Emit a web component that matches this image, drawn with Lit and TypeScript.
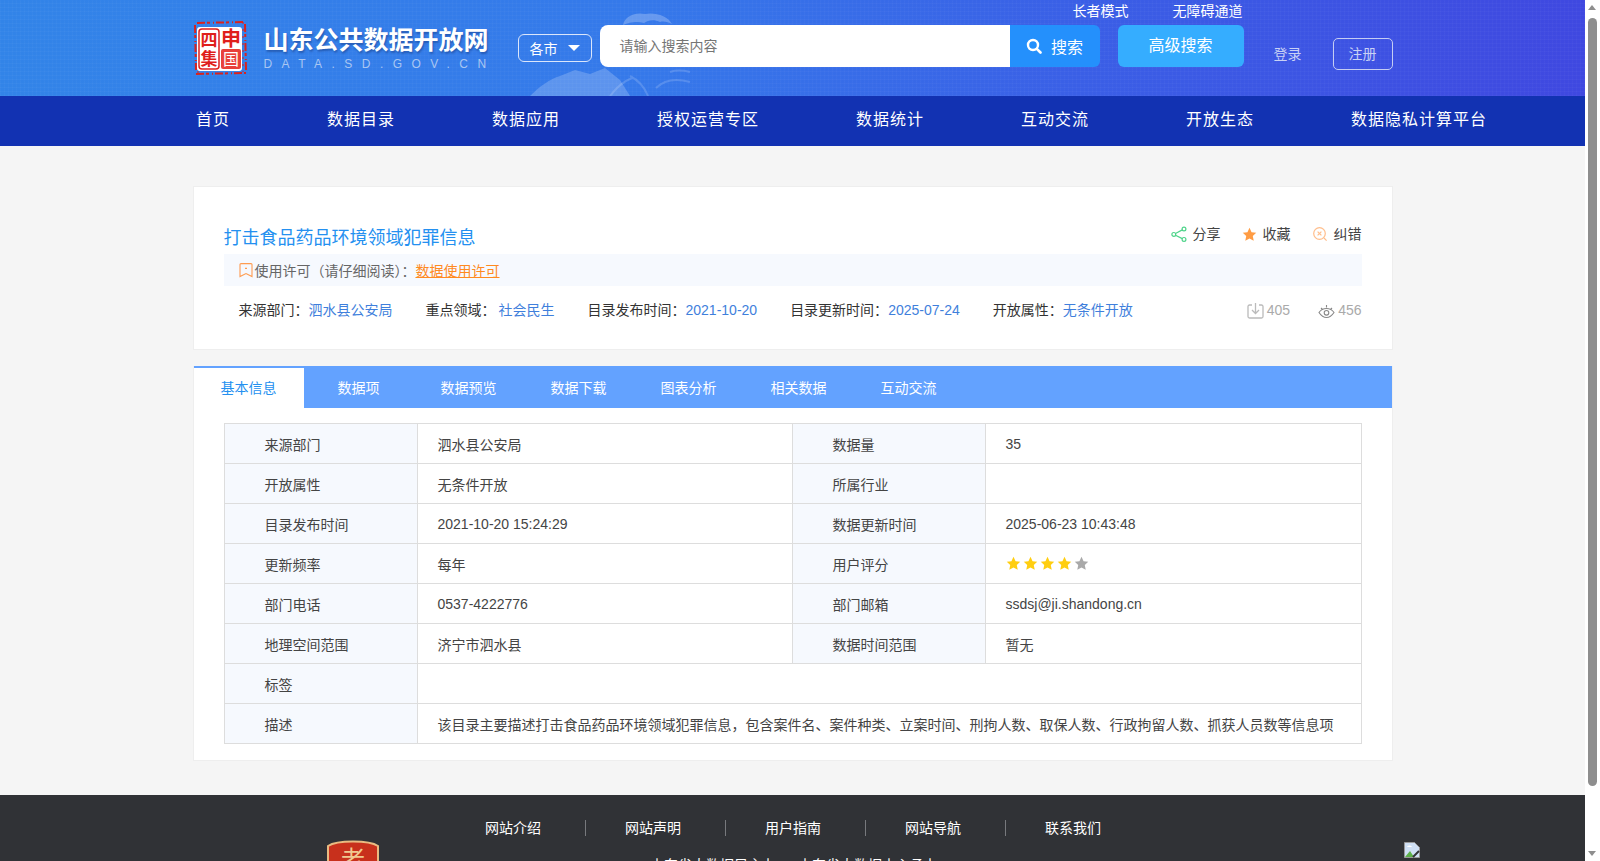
import { LitElement, html, css, svg } from 'lit';
import { customElement } from 'lit/decorators.js';

const NAV = ['首页', '数据目录', '数据应用', '授权运营专区', '数据统计', '互动交流', '开放生态', '数据隐私计算平台'];
const TABS = ['基本信息', '数据项', '数据预览', '数据下载', '图表分析', '相关数据', '互动交流'];
const FOOT = ['网站介绍', '网站声明', '用户指南', '网站导航', '联系我们'];

const STAR = 'M8 .8l2.2 4.7 5 .6-3.7 3.5 1 5.1L8 12.2l-4.500 2.500 1-5.100L.8 6.100l5-.6z';

const star = (fill: string, size = 15) => html`
  <svg width=${size} height=${size} viewBox="0 0 16 16"><path d=${STAR} fill=${fill}></path></svg>
`;

// faint mountain and pine picture behind the search box
const mountain = svg`
  <svg class="mountain" width="180" height="96" viewBox="0 0 180 96">
    <path d="M0 96C10 86 20 79 30 76l15-6 15 4 15-6 15 12 10 16z" fill="#fff" opacity=".2"></path>
    <path d="M93 25c2-9 12-13 22-11 10-2 23 2 27 10-4-2-8-3-12-2-6-3-12-2-16 1-7-2-14-1-21 2z" fill="#fff" opacity=".24"></path>
    <path d="M80 96c6-8 12-14 22-18M100 76c8 4 14 10 18 20M126 88c8-8 20-10 34-6M140 72c6-2 12-2 20 0" fill="none" stroke="#fff" stroke-width="2" opacity=".16"></path>
  </svg>
`;

@customElement('app-root')
export class AppRoot extends LitElement {
  static styles = css`
    :host {
      display: block;
      position: relative;
      height: 861px;
      overflow: hidden;
      background: #fff;
      font-family: "Liberation Sans", "Noto Sans CJK SC", sans-serif;
      font-size: 14px;
      color: #333;
    }
    .page {
      width: 1585px;
      height: 861px;
      overflow: hidden;
      background: #f5f5f5;
    }
    .wrap {
      width: 1200px;
      margin: 0 auto;
      position: relative;
    }

    /* header */
    .top {
      height: 96px;
      position: relative;
      overflow: hidden;
      background:
        repeating-linear-gradient(0deg, rgba(255,255,255,.025) 0 1px, transparent 1px 4px),
        repeating-linear-gradient(90deg, rgba(255,255,255,.025) 0 1px, transparent 1px 4px),
        linear-gradient(90deg, #3284e8 0%, #3579ea 40%, #3a5fe6 68%, #3f48e0 100%);
    }
    .mountain { position: absolute; left: 530px; top: 0; }
    .top .wrap { display: flex; height: 96px; }
    .logo { width: 60px; height: 60px; margin: 17px 0 0 -3px; flex: none; }
    .brand { width: 227px; margin: 25px 0 0 14px; flex: none; color: #fff; }
    .brand b {
      display: block;
      font-size: 25px;
      line-height: 30px;
      font-weight: 700;
      white-space: nowrap;
      text-shadow: 1px 2px 2px rgba(20,50,120,.45);
    }
    .brand span {
      display: block;
      margin-top: 2px;
      font-size: 12px;
      line-height: 14px;
      letter-spacing: 9.45px;
      color: #a9c6f2;
      white-space: nowrap;
    }
    .city {
      box-sizing: border-box;
      width: 74px;
      height: 28px;
      margin: 34px 0 0 27px;
      flex: none;
      border: 1px solid #dbe6fb;
      border-radius: 6px;
      color: #fff;
      display: flex;
      align-items: center;
      padding-left: 11px;
      gap: 10px;
      font-size: 14px;
    }
    .city i {
      border: 6px solid transparent;
      border-top: 6px solid #fff;
      border-bottom: 0;
      width: 0;
      height: 0;
    }
    .search { display: flex; height: 42px; margin: 25px 0 0 8px; flex: none; }
    .search .input {
      width: 410px;
      background: #fff;
      border-radius: 8px 0 0 8px;
      padding-left: 20px;
      box-sizing: border-box;
      line-height: 42px;
      color: #757575;
    }
    .search .btn {
      width: 90px;
      background: #2490fc;
      border-radius: 0 6px 6px 0;
      color: #fff;
      font-size: 16px;
      display: flex;
      align-items: center;
      justify-content: center;
      gap: 9px;
    }
    .adv {
      width: 126px;
      height: 42px;
      margin: 25px 0 0 18px;
      flex: none;
      background: #35adff;
      border-radius: 6px;
      color: #fff;
      font-size: 16px;
      text-align: center;
      line-height: 41px;
    }
    .login { margin: 44px 0 0 30px; flex: none; color: #c9d1f5; line-height: 20px; }
    .reg {
      box-sizing: border-box;
      width: 60px;
      height: 32px;
      margin: 38px 0 0 31px;
      flex: none;
      border: 1px solid #c5cdf3;
      border-radius: 5px;
      color: #c9d1f5;
      text-align: center;
      line-height: 30px;
    }
    .access {
      position: absolute;
      top: 1px;
      right: 150px;
      display: flex;
      gap: 44px;
      color: #fff;
      line-height: 20px;
    }

    /* nav */
    .nav { height: 50px; background: #1232b2; }
    .nav .wrap {
      display: flex;
      gap: 97px;
      padding-left: 3.5px;
      box-sizing: border-box;
    }
    .nav a {
      flex: none;
      color: #fff;
      font-size: 16px;
      letter-spacing: 1px;
      line-height: 48px;
      white-space: nowrap;
    }

    /* cards */
    .card { background: #fff; border: 1px solid #eeeeee; box-sizing: border-box; }
    .head { height: 164px; margin-top: 40px; padding: 0 30px; }
    .title-row { display: flex; justify-content: space-between; height: 67px; }
    .title { font-size: 18px; color: #2490f0; line-height: 28px; margin-top: 37px; }
    .acts { display: flex; margin-top: 35px; line-height: 24px; gap: 21px; color: #444; height: 24px; }
    .acts span { display: flex; align-items: center; gap: 6px; }
    .license {
      height: 32px;
      background: #f6f9fe;
      display: flex;
      align-items: center;
      padding-left: 15px;
      color: #666;
    }
    .license svg { margin-right: 2px; }
    .license a { color: #ff8a1f; text-decoration: underline; }
    .meta { display: flex; align-items: center; padding: 0 0 0 15px; margin-top: 8px; line-height: 32px; }
    .meta > div { margin-right: 33px; white-space: nowrap; }
    .meta em { font-style: normal; color: #3f7fdc; }
    .meta em.wide { padding-left: 3px; }
    .stats { margin-left: auto; display: flex; gap: 28px; color: #aaa; }
    .stats > span { display: flex; align-items: center; gap: 3px; }
    .stats .eye { margin-top: 2px; }
    .meta .stats { margin-right: 0; }

    .body { margin-top: 16px; height: 395px; border-top: 0; }
    .tabs {
      height: 42px;
      background: #63a2ff;
      display: flex;
    }
    .tabs span {
      width: 110px;
      color: #fff;
      text-align: center;
      line-height: 44px;
    }
    .tabs span.on {
      background: #fff;
      color: #2490f0;
      border-top: 2px solid #63a2ff;
      box-sizing: border-box;
      line-height: 40px;
    }
    table {
      width: 1137px;
      margin: 15px 0 0 30px;
      border-collapse: collapse;
      table-layout: fixed;
      color: #444;
    }
    td {
      border: 1px solid #ddd;
      height: 40px;
      padding: 0 0 0 20px;
      box-sizing: border-box;
      white-space: nowrap;
    }
    td.k { background: #f6f9fe; padding-left: 40px; }
    .stars { display: flex; gap: 2px; }

    /* footer */
    .foot { margin-top: 34px; height: 66px; background: #303236; position: relative; overflow: hidden; }
    .foot-nav {
      position: absolute;
      left: 445px;
      top: 25px;
      display: flex;
      color: #fff;
      line-height: 16px;
    }
    .foot-nav span { width: 140px; box-sizing: border-box; padding-left: 40px; }
    .foot-nav span + span { border-left: 1px solid #77797d; padding-left: 39px; }
    .foot-line {
      position: absolute;
      left: 650px;
      top: 60px;
      color: #fff;
      line-height: 20px;
      white-space: nowrap;
      word-spacing: 18px;
    }
    .badge { position: absolute; left: 327px; top: 43px; }
    .broken { position: absolute; left: 1404px; top: 47px; }

    /* window scrollbar */
    .sb {
      position: absolute;
      right: 0;
      top: 0;
      width: 15px;
      height: 861px;
      background: #fff;
    }
    .sb .thumb {
      position: absolute;
      left: 3px;
      top: 18px;
      width: 9px;
      height: 768px;
      background: #8e8e8e;
      border-radius: 5px;
    }
    .sb i { position: absolute; left: 3px; width: 0; height: 0; border: 4.5px solid transparent; }
    .sb .up { top: 5px; border-bottom: 5px solid #8e8e8e; border-top: 0; }
    .sb .down { bottom: 5px; border-top: 5px solid #8e8e8e; border-bottom: 0; }
  `;

  private logo() {
    return html`
      <svg class="logo" viewBox="0 0 60 60">
        <path d="M5 8l1 45M55 7l1 46M7 6l48-1M6 57l50-1" fill="none" stroke="#d8231f" stroke-width="2" stroke-dasharray="8 2 3 3 1 2"></path>
        <path d="M8 5v51M53 5v50" fill="none" stroke="#d8231f" stroke-width="1" stroke-dasharray="2 5"></path>
        <rect x="7" y="10" width="45" height="44" rx="3" fill="#fff"></rect>
        <rect x="9" y="12" width="20" height="40" rx="3" fill="none" stroke="#df1f1c" stroke-width="1.5"></rect>
        <rect x="31" y="32" width="20" height="20" rx="2" fill="#e8403a"></rect>
        <text x="19" y="29" font-size="17" font-weight="700" fill="#df1f1c" text-anchor="middle">四</text>
        <text x="19" y="48" font-size="17" font-weight="700" fill="#df1f1c" text-anchor="middle">集</text>
        <text x="41" y="29" font-size="20" font-weight="700" fill="#df1f1c" text-anchor="middle">申</text>
        <text x="41" y="48" font-size="16" fill="#fff" text-anchor="middle">国</text>
      </svg>
    `;
  }

  private row(cells: [string, unknown][]) {
    return html`<tr>
      ${cells.map(([k, v]) => html`<td class="k">${k}</td><td>${v}</td>`)}
    </tr>`;
  }

  render() {
    const stars = html`<div class="stars">
      ${star('#ffce10')}${star('#ffce10')}${star('#ffce10')}${star('#ffce10')}${star('#a9a9a9')}
    </div>`;

    return html`
      <div class="page">
        <div class="top">
          ${mountain}
          <div class="wrap">
            ${this.logo()}
            <div class="brand">
              <b>山东公共数据开放网</b>
              <span>DATA.SD.GOV.CN</span>
            </div>
            <div class="city">各市<i></i></div>
            <div class="search">
              <div class="input">请输入搜索内容</div>
              <div class="btn">
                <svg width="16" height="16" viewBox="0 0 16 16" fill="none" stroke="#fff">
                  <circle cx="7" cy="7" r="5" stroke-width="2.4"></circle>
                  <path d="M10.800 10.800l3.700 3.700" stroke-width="2.600" stroke-linecap="round"></path>
                </svg>
                搜索
              </div>
            </div>
            <div class="adv">高级搜索</div>
            <div class="login">登录</div>
            <div class="reg">注册</div>
            <div class="access"><span>长者模式</span><span>无障碍通道</span></div>
          </div>
        </div>
        <div class="nav">
          <div class="wrap">${NAV.map((n) => html`<a>${n}</a>`)}</div>
        </div>

        <div class="wrap">
          <div class="card head">
            <div class="title-row">
              <div class="title">打击食品药品环境领域犯罪信息</div>
              <div class="acts">
                <span>
                  <svg width="16" height="16" viewBox="0 0 16 16" fill="none" stroke="#4fd48a" stroke-width="1.2">
                    <circle cx="13" cy="3" r="1.9"></circle><circle cx="2.800" cy="8.400" r="1.9"></circle><circle cx="13" cy="13.400" r="1.9"></circle>
                    <path d="M11.300 3.900L4.500 7.500M4.500 9.300l6.800 3.300"></path>
                  </svg>
                  分享
                </span>
                <span>${star('#ff9c44')}收藏</span>
                <span>
                  <svg width="16" height="16" viewBox="0 0 16 16" fill="none" stroke="#ffbe8c" stroke-width="1.2">
                    <circle cx="7.500" cy="7.500" r="5.800"></circle>
                    <path d="M5.600 5.600l3.800 3.800M9.400 5.600L5.600 9.400M12 12l2.600 2.600"></path>
                  </svg>
                  纠错
                </span>
              </div>
            </div>
            <div class="license">
              <svg width="14" height="15" viewBox="0 0 14 15" fill="none" stroke="#ff9c50" stroke-width="1.1">
                <path d="M1 1.600a1 1 0 0 1 1-1h10a1 1 0 0 1 1 1V13.600L7 10.600 1 13.600z"></path>
                <path d="M6 5.400h2"></path>
              </svg>
              使用许可（请仔细阅读）：<a>数据使用许可</a>
            </div>
            <div class="meta">
              <div>来源部门：<em>泗水县公安局</em></div>
              <div>重点领域：<em class="wide">社会民生</em></div>
              <div>目录发布时间：<em>2021-10-20</em></div>
              <div>目录更新时间：<em>2025-07-24</em></div>
              <div>开放属性：<em>无条件开放</em></div>
              <div class="stats">
                <span>
                  <svg width="17" height="17" viewBox="0 0 17 17" fill="none" stroke="#bbb" stroke-width="1.3">
                    <path d="M5 3H2.500A1.500 1.500 0 0 0 1 4.500v10A1.500 1.500 0 0 0 2.500 16h12a1.500 1.500 0 0 0 1.500-1.500v-10A1.500 1.500 0 0 0 14.500 3H12"></path>
                    <path d="M8.500 1v10M5 8l3.500 3.500L12 8"></path>
                  </svg>
                  405
                </span>
                <span>
                  <svg class="eye" width="17" height="16" viewBox="0 0 17 16" fill="none" stroke="#888" stroke-width="1.1">
                    <path d="M1 9.500C3 6.500 5.500 5.500 8.500 5.500s5.500 1 7.500 4c-2 3-4.500 5-7.500 5S3 12.500 1 9.500z"></path>
                    <circle cx="8.500" cy="9.800" r="2.300"></circle>
                    <path d="M3 5l1.500 1.500M8.500 2v2.500M14 5l-1.500 1.500"></path>
                  </svg>
                  456
                </span>
              </div>
            </div>
          </div>

          <div class="card body">
            <div class="tabs">
              ${TABS.map((t, i) => html`<span class=${i === 0 ? 'on' : ''}>${t}</span>`)}
            </div>
            <table>
              <colgroup>
                <col style="width:193px" /><col style="width:375px" />
                <col style="width:193px" /><col style="width:376px" />
              </colgroup>
              ${this.row([['来源部门', '泗水县公安局'], ['数据量', '35']])}
              ${this.row([['开放属性', '无条件开放'], ['所属行业', '']])}
              ${this.row([['目录发布时间', '2021-10-20 15:24:29'], ['数据更新时间', '2025-06-23 10:43:48']])}
              ${this.row([['更新频率', '每年'], ['用户评分', stars]])}
              ${this.row([['部门电话', '0537-4222776'], ['部门邮箱', 'ssdsj@ji.shandong.cn']])}
              ${this.row([['地理空间范围', '济宁市泗水县'], ['数据时间范围', '暂无']])}
              <tr><td class="k">标签</td><td colspan="3"></td></tr>
              <tr>
                <td class="k">描述</td>
                <td colspan="3">该目录主要描述打击食品药品环境领域犯罪信息，包含案件名、案件种类、立案时间、刑拘人数、取保人数、行政拘留人数、抓获人员数等信息项</td>
              </tr>
            </table>
          </div>
        </div>

        <div class="foot">
          <svg class="badge" width="52" height="30" viewBox="0 0 52 30">
            <path d="M1 30V8C10 2 42 2 51 8v22z" fill="#c8301c" stroke="#e9bb82" stroke-width="2"></path>
            <text x="26" y="30" font-size="24" fill="#f0c890" text-anchor="middle">老</text>
          </svg>
          <div class="foot-nav">${FOOT.map((f) => html`<span>${f}</span>`)}</div>
          <div class="foot-line">山东省大数据局主办 山东省大数据中心承办</div>
          <svg class="broken" width="16" height="16" viewBox="0 0 16 16">
            <path d="M.5.5h10l5 5v10H.5z" fill="#cfe0f5" stroke="#999"></path>
            <path d="M1 15l5-6 4 6z" fill="#5cb04a"></path>
            <path d="M3 5c1-2 4-2 5 0z" fill="#fff"></path>
            <path d="M9 15l6-6" stroke="#303236" stroke-width="2"></path>
          </svg>
        </div>
      </div>
      <div class="sb">
        <i class="up"></i>
        <div class="thumb"></div>
        <i class="down"></i>
      </div>
    `;
  }
}
